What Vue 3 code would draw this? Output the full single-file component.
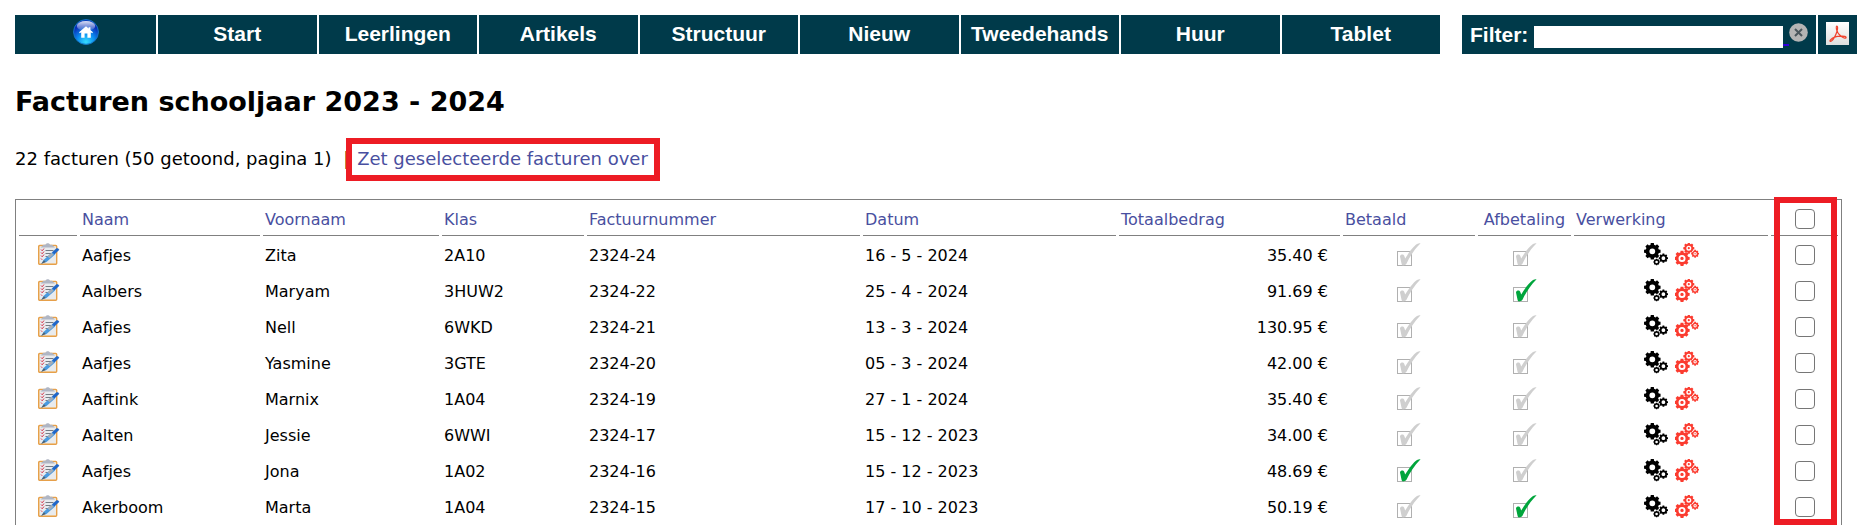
<script setup>
import { ref, computed } from 'vue'

const menu = ['Start', 'Leerlingen', 'Artikels', 'Structuur', 'Nieuw', 'Tweedehands', 'Huur', 'Tablet']
const columns = ['Naam', 'Voornaam', 'Klas', 'Factuurnummer', 'Datum', 'Totaalbedrag', 'Betaald', 'Afbetaling', 'Verwerking']

const filter = ref('')
const invoices = ref([
  { name: 'Aafjes', first: 'Zita', group: '2A10', number: '2324-24', date: '16 - 5 - 2024', total: '35.40', paid: false, installment: false, selected: false },
  { name: 'Aalbers', first: 'Maryam', group: '3HUW2', number: '2324-22', date: '25 - 4 - 2024', total: '91.69', paid: false, installment: true, selected: false },
  { name: 'Aafjes', first: 'Nell', group: '6WKD', number: '2324-21', date: '13 - 3 - 2024', total: '130.95', paid: false, installment: false, selected: false },
  { name: 'Aafjes', first: 'Yasmine', group: '3GTE', number: '2324-20', date: '05 - 3 - 2024', total: '42.00', paid: false, installment: false, selected: false },
  { name: 'Aaftink', first: 'Marnix', group: '1A04', number: '2324-19', date: '27 - 1 - 2024', total: '35.40', paid: false, installment: false, selected: false },
  { name: 'Aalten', first: 'Jessie', group: '6WWI', number: '2324-17', date: '15 - 12 - 2023', total: '34.00', paid: false, installment: false, selected: false },
  { name: 'Aafjes', first: 'Jona', group: '1A02', number: '2324-16', date: '15 - 12 - 2023', total: '48.69', paid: true, installment: false, selected: false },
  { name: 'Akerboom', first: 'Marta', group: '1A04', number: '2324-15', date: '17 - 10 - 2023', total: '50.19', paid: false, installment: true, selected: false }
])

const allSelected = computed({
  get: () => invoices.value.every((i) => i.selected),
  set: (v) => invoices.value.forEach((i) => { i.selected = v })
})

// Outline of a cog wheel with a round hole; filled with the even-odd rule.
function gear(cx, cy, r, hole, teeth = 8, depth = 0.2) {
  const step = (Math.PI * 2) / teeth
  const inner = r * (1 - depth)
  const pts = []
  for (let i = 0; i < teeth; i++) {
    const a = i * step - Math.PI / 2
    for (const [o, rad] of [[-0.34, inner], [-0.24, r], [0.24, r], [0.34, inner]]) {
      pts.push((cx + rad * Math.cos(a + o * step)).toFixed(2) + ' ' + (cy + rad * Math.sin(a + o * step)).toFixed(2))
    }
  }
  return `M${pts.join('L')}Z` + circle(cx, cy, hole)
}
function circle(cx, cy, r) {
  return `M${cx - r} ${cy}a${r} ${r} 0 1 0 ${2 * r} 0a${r} ${r} 0 1 0 ${-2 * r} 0Z`
}

const blackGears = gear(8.3, 8.3, 8.4, 2.9) + gear(19.4, 15.2, 4.7, 1.9, 8, 0.2) + gear(12.6, 19, 3.3, 1.3, 8, 0.15)
const redGears =
  gear(7, 15.4, 7.8, 3.5) + circle(7, 15.4, 1.7) +
  gear(13.8, 5.2, 5.6, 2.5) + circle(13.8, 5.2, 1.1) +
  gear(20.1, 10.7, 4, 1.7) + circle(20.1, 10.7, 0.7)
</script>

<template>
  <div class="page">
    <header class="topbar">
      <nav class="menu">
        <a href="#" class="home" aria-label="Home">
          <svg width="26" height="26" viewBox="0 0 26 26">
            <defs>
              <radialGradient id="orb" cx="0.5" cy="0.9" r="0.8">
                <stop offset="0" stop-color="#35dcff" />
                <stop offset="0.45" stop-color="#0a8cf0" />
                <stop offset="0.85" stop-color="#0a2fb8" />
                <stop offset="1" stop-color="#0a2fb8" />
              </radialGradient>
              <linearGradient id="gloss" x1="0" y1="0" x2="0" y2="1">
                <stop offset="0" stop-color="#fff" stop-opacity="0.85" />
                <stop offset="1" stop-color="#fff" stop-opacity="0.1" />
              </linearGradient>
            </defs>
            <circle cx="13" cy="13" r="12.4" fill="url(#orb)" stroke="#1677c8" />
            <ellipse cx="13" cy="7" rx="9.2" ry="5" fill="url(#gloss)" />
            <path d="M6 13.2 13 7.2l2.6 2.2V8.2h1.8v2.8l2.6 2.200-.9 1-1.300-1V18.800h-3.400V14.600h-2.800v4.200H8.200v-5.600l-1.300 1Z" fill="#fff" />
          </svg>
        </a>
        <a v-for="item in menu" :key="item" href="#">{{ item }}</a>
      </nav>
      <form class="filter" @submit.prevent>
        <label for="filter">Filter:</label>
        <input id="filter" v-model="filter" type="text" />
        <a href="#" class="clear" aria-label="Filter wissen" @click.prevent="filter = ''">&nbsp;<svg width="19" height="19" viewBox="0 0 19 19">
          <circle cx="9.5" cy="9.5" r="9.3" fill="#b4b4b4" />
          <path d="M6 6l7 7M13 6l-7 7" stroke="#4a565c" stroke-width="2" />
        </svg></a>
      </form>
      <a href="#" class="pdf" aria-label="PDF">
        <svg width="23" height="23" viewBox="0 0 23 23">
          <defs>
            <linearGradient id="sheet" x1="0" y1="0" x2="0" y2="1">
              <stop offset="0" stop-color="#fff" />
              <stop offset="1" stop-color="#dedede" />
            </linearGradient>
          </defs>
          <rect width="23" height="23" fill="url(#sheet)" />
          <path d="M10.5 4.200c1.600-.6 1.200 3 .4 5.300-.8 2.700-3.200 7.500-5.200 9.300-1.400 1.200-2.400.3-1.200-1 1.600-1.800 6.500-3.500 10.500-3.600 2.800-.1 5.400.3 5.100 1.400-.4 1.300-3.200.2-5-1.300-2.200-1.800-4.300-5-4.700-7.500-.2-1.500-.3-2.400.1-2.600Z" fill="none" stroke="#f0432e" stroke-width="1.200" />
        </svg>
      </a>
    </header>

    <h1>Facturen schooljaar 2023 - 2024</h1>
    <p class="summary">22 facturen (50 getoond, pagina 1) <span class="divider">|</span> <a href="#" class="transfer">Zet geselecteerde facturen over</a></p>

    <main class="list">
      <table>
        <colgroup>
          <col class="c-edit" /><col class="c-name" /><col class="c-first" /><col class="c-group" />
          <col class="c-number" /><col class="c-date" /><col class="c-total" /><col class="c-paid" />
          <col class="c-inst" /><col class="c-process" /><col class="c-select" />
        </colgroup>
        <thead>
          <tr>
            <th></th>
            <th v-for="c in columns" :key="c" scope="col" :class="{ centered: c === 'Afbetaling' }"><a href="#">{{ c }}</a></th>
            <th><input v-model="allSelected" type="checkbox" aria-label="Alles selecteren" /></th>
          </tr>
        </thead>
        <tbody>
          <tr v-for="inv in invoices" :key="inv.number">
            <td>
              <a href="#" class="icons edit" aria-label="Bewerken">
                <svg width="24" height="24" viewBox="0 0 24 24">
                  <rect x="2.700" y="3.500" width="18" height="18.800" rx="1" fill="#f3ead8" stroke="#e6a04a" stroke-width="1.400" />
                  <path d="M4 4.500h15.500v16.500H4Z" fill="#e8ebee" />
                  <path d="M4.500 5.500 7.500 2.800h2C9.700.8 13.800.8 14 2.800h2l3 2.700Z" fill="#b0b6c4" />
                  <path d="M9.500 8.500h8M9.500 11.500h6M9.500 14.500h4M9.500 17.500h3" stroke="#767c84" />
                  <path d="M5 7.500l1.200 1.300L8 6.500M5 10.500l1.200 1.300L8 9.500M5 13.500l1.200 1.300L8 12.500M5 16.500l1.200 1.300" fill="none" stroke="#d8354a" />
                  <path d="M5.500 21.500l2-3.500 9-8 2.500 2.500-8.500 7.500Z" fill="#4b9be0" />
                  <path d="M5 22l3-3.800 1.800 1.700Z" fill="#53616e" />
                  <path d="M11.500 14.300l4-3.500 2 2-4 3.500Z" fill="#a3adb8" />
                  <path d="M16 10.300l4.500-4L22 6.200l1.300 1.500-4.800 4.800Z" fill="#1f66c8" />
                </svg>
              </a>
            </td>
            <td>{{ inv.name }}</td>
            <td>{{ inv.first }}</td>
            <td>{{ inv.group }}</td>
            <td>{{ inv.number }}</td>
            <td>{{ inv.date }}</td>
            <td class="amount">{{ inv.total }} €</td>
            <td v-for="(done, i) in [inv.paid, inv.installment]" :key="i">
              <a href="#" class="icons" :class="{ done }" :aria-label="columns[6 + i]">
                <svg width="24" height="24" viewBox="0 0 24 24">
                  <rect x="0.500" y="8.500" width="14" height="14" fill="#fff" stroke="#b0b0b0" />
                  <path class="tick" d="M3 13.500C3.300 11.200 6.500 11 7.200 12.700l1 2.900C12 9.200 16.500 3.200 20 1q1.900-1.100 3.600-.8C17.500 6 12.600 14 9.600 20.500 8.800 22.200 7 22.400 6 22.400 5 22.400 4.700 21.500 4.500 20.500Z" />
                </svg>
              </a>
            </td>
            <td>
              <div class="icons">
                <a href="#" aria-label="Verwerken"><svg width="24" height="24" viewBox="0 0 24 24"><path :d="blackGears" fill="#000" fill-rule="evenodd" /></svg></a>
                <a href="#" aria-label="Verwerking ongedaan maken"><svg width="24" height="24" viewBox="0 0 24 24"><path :d="redGears" fill="#fb3b2f" fill-rule="evenodd" /></svg></a>
              </div>
            </td>
            <td><input v-model="inv.selected" type="checkbox" :aria-label="'Selecteer ' + inv.number" /></td>
          </tr>
        </tbody>
      </table>
      <div class="marker"></div>
    </main>
  </div>
</template>

<style>
body {
  margin: 0;
  background: #fff;
}
</style>

<style scoped>
.page {
  box-sizing: border-box;
  display: flex;
  flex-direction: column;
  height: 100vh;
  overflow: hidden;
  padding: 15px 9px 0 15px;
  color: #000;
  font-family: Verdana, "DejaVu Sans", sans-serif;
  font-size: 18px;
}
a {
  color: #494fa0;
  text-decoration: none;
}
.topbar {
  display: flex;
  flex: none;
  height: 39px;
  font: bold 21px/39px Arial, "Liberation Sans", sans-serif;
}
.menu {
  display: flex;
  flex: 1;
  gap: 2px;
  margin-right: 22px;
  line-height: 37px;
}
.menu a {
  flex: 1 1 0;
  min-width: 0;
  background: #003a4a;
  color: #fff;
  text-align: center;
}
.menu .home {
  flex: 0 0 141px;
}
.home svg {
  display: block;
  margin: 4px auto;
}
.filter {
  box-sizing: border-box;
  display: flex;
  align-items: baseline;
  width: 354px;
  padding: 0 8px;
  background: #003a4a;
  color: #fff;
}
.filter input {
  box-sizing: border-box;
  flex: 1;
  min-width: 0;
  height: 22px;
  margin-left: 6px;
  padding: 0 2px;
  border: 0;
  border-radius: 0;
  background: #fff;
  font: 18px Arial, "Liberation Sans", sans-serif;
}
.clear {
  color: #3300dd;
  text-decoration: underline;
}
.pdf {
  display: flex;
  align-items: center;
  justify-content: center;
  width: 39px;
  margin-left: 2px;
  background: #003a4a;
}
.pdf svg {
  margin-bottom: 2px;
}
h1 {
  margin: 31px 0 0;
  font-size: 27px;
  line-height: 34px;
}
.summary {
  margin: 28px 0 0;
  line-height: 24px;
}
.divider {
  margin: 0 2px 0 6px;
}
.transfer {
  position: relative;
}
.transfer::after {
  content: "";
  position: absolute;
  inset: -10px -12px -12px -11px;
  border: 6px solid #ed1c24;
}
.list {
  position: relative;
  flex: 1;
  min-height: 0;
  margin: 28px 15px 0 0;
}
table {
  width: 100%;
  table-layout: fixed;
  border: 1px solid #808080;
  border-bottom: 0;
  border-collapse: separate;
  border-spacing: 3px;
  font-size: 16px;
}
th,
td {
  box-sizing: border-box;
  height: 33px;
  padding: 0 2px;
  font-weight: normal;
  line-height: 24px;
  text-align: left;
  vertical-align: middle;
  white-space: nowrap;
}
th {
  padding-top: 2px;
  border-bottom: 1px solid #808080;
}
.centered {
  text-align: center;
}
.c-edit { width: 58px; }
.c-name { width: 180px; }
.c-first { width: 176px; }
.c-group { width: 142px; }
.c-number { width: 273px; }
.c-date { width: 253px; }
.c-total { width: 221px; }
.c-paid { width: 132px; }
.c-inst { width: 93px; }
.c-process { width: 194px; }
.c-select { width: 67px; }
.amount {
  padding-right: 12px;
  text-align: right;
}
.icons {
  display: flex;
  justify-content: center;
  gap: 7px;
  margin-bottom: 2px;
}
.edit {
  margin-bottom: 4px;
}
.icons svg {
  display: block;
}
.tick {
  fill: #cfcfcf;
}
.done .tick {
  fill: #00a53c;
}
table input {
  appearance: none;
  display: block;
  box-sizing: border-box;
  width: 20px;
  height: 20px;
  margin: 0 auto 2px;
  border: 1px solid #767676;
  border-radius: 4px;
  background: #fff;
}
table input:checked {
  background: #0075ff;
}
.marker {
  position: absolute;
  box-sizing: border-box;
  top: -2px;
  right: 5px;
  bottom: 0;
  width: 63px;
  border: 6px solid #ed1c24;
  pointer-events: none;
}
</style>
